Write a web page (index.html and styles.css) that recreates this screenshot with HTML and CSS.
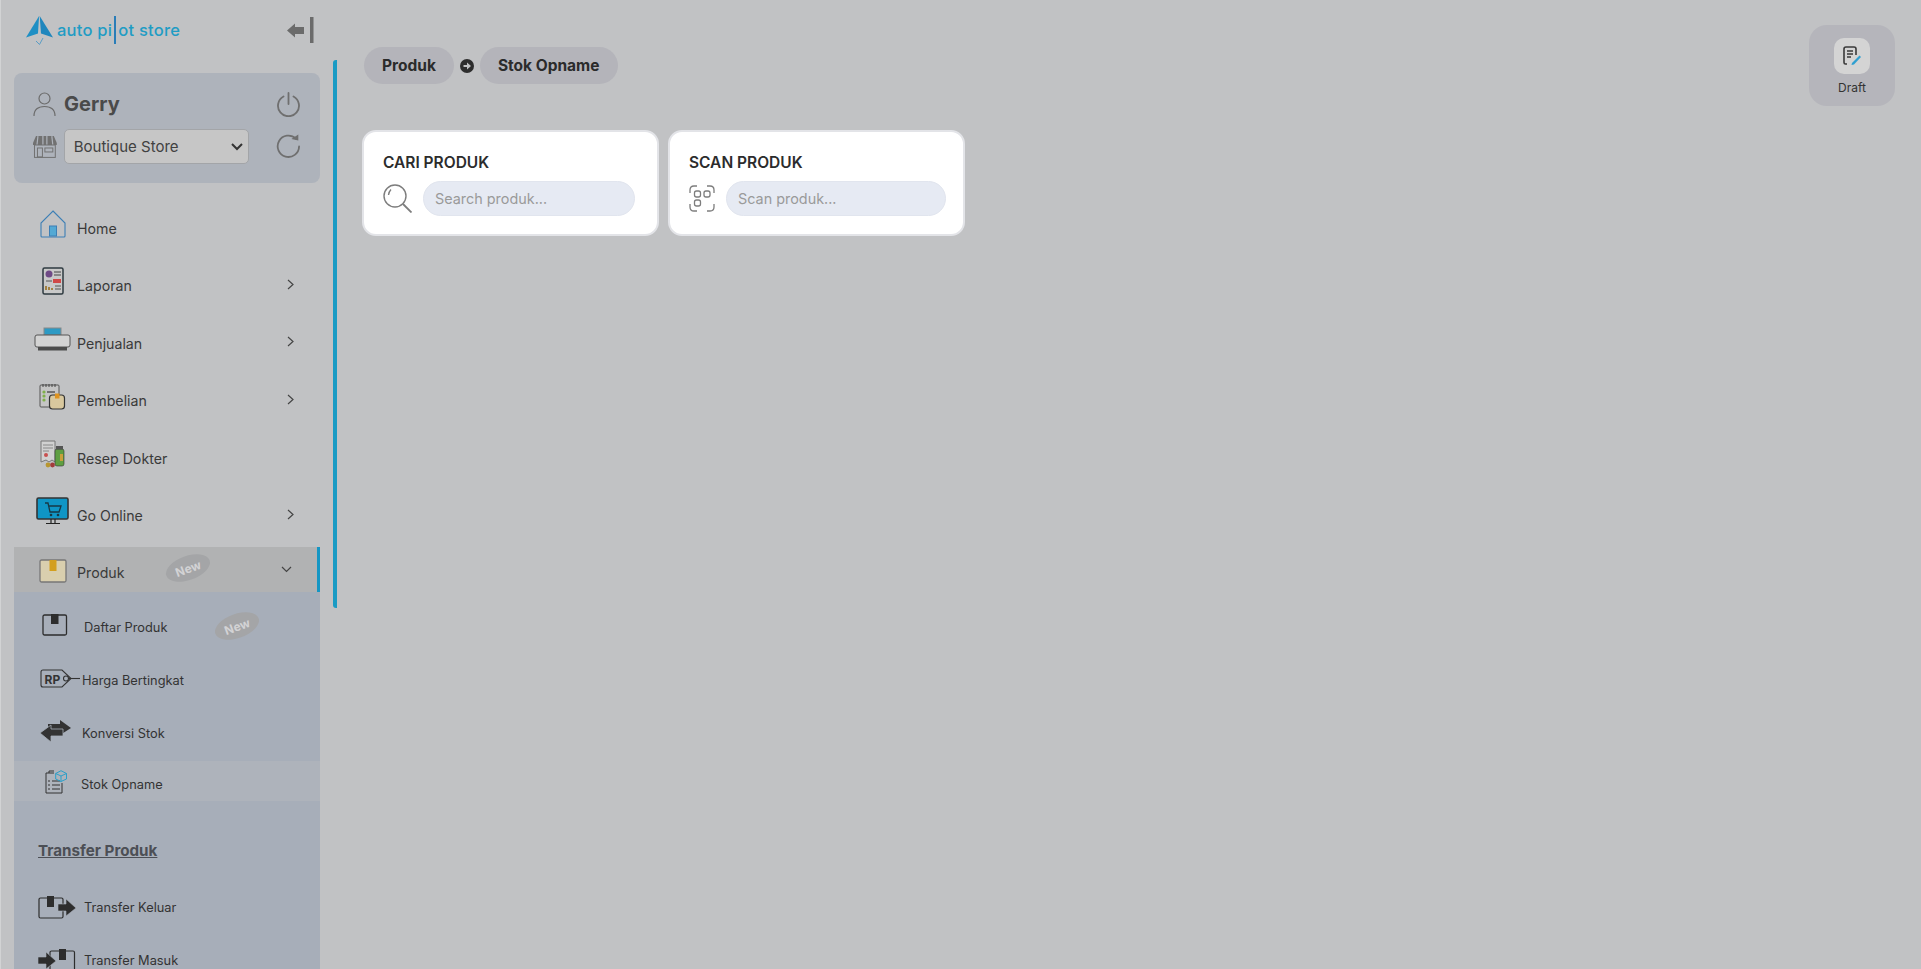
FILE: index.html
```html
<!DOCTYPE html>
<html lang="id">
<head>
<meta charset="utf-8">
<title>Stok Opname</title>
<link rel="stylesheet" href="styles.css">
</head>
<body>
<div class="app">
  <aside class="sidebar">
    <div class="brand">
      <div class="logo">
        <svg class="logo-mark" width="27" height="29" viewBox="0 0 27 29"><path d="M13.700 0 L27 21.500 L15 17.500 Z" fill="#1f86bd"/><path d="M13.100 0 L0 21.500 L12 17.500 Z" fill="#1f8fc4"/><path d="M10 25 L13.500 28.500 L17 22" fill="none" stroke="#5a9cc4" stroke-width="1"/></svg>
        <span class="logo-text">auto pi<span class="logo-bar"></span>ot store</span>
      </div>
      <svg class="collapse" width="27" height="27" viewBox="0 0 27 27"><path d="M0 13.500 L8 6.500 V10 H17 V17 H8 V20.500 Z" fill="#6b6b6b"/><rect x="23" y="0" width="3.500" height="26" fill="#6b6b6b"/></svg>
    </div>
    <div class="scroll-thumb"></div>
    <section class="user-card">
      <div class="user-row">
        <svg class="user-icon" width="23" height="24" viewBox="0 0 23 24" fill="none" stroke="#6c6c6c" stroke-width="1.200"><circle cx="11.500" cy="6.500" r="5.500"/><path d="M1 24 C1 17 6 14.500 11.500 14.500 S22 17 22 24"/></svg>
        <span class="user-name">Gerry</span>
        <svg class="side-action" width="25" height="25" viewBox="0 0 25 25" fill="none" stroke="#6f6f6f" stroke-width="1.800" stroke-linecap="round"><path d="M7.500 4.500 A10.500 10.500 0 1 0 17.500 4.500"/><path d="M12.500 1 V12"/></svg>
      </div>
      <div class="user-row store-row">
        <svg class="store-icon" width="24" height="22" viewBox="0 0 24 22"><path d="M3 0 H21 L24 7 V9 H0 V7 Z" fill="#717171"/><path d="M5 0 L4 9 M10 0 V9 M14 0 V9 M19 0 L20 9" stroke="#aeb3bb" stroke-width="1.200"/><rect x="1.500" y="9" width="21" height="12.500" fill="none" stroke="#717171" stroke-width="1"/><rect x="4.500" y="12" width="5" height="9" fill="none" stroke="#717171"/><rect x="12" y="12" width="8" height="4" fill="none" stroke="#717171"/></svg>
        <div class="store-select">
          <span>Boutique Store</span>
          <svg width="12" height="8" viewBox="0 0 12 8" fill="none" stroke="#333" stroke-width="2"><path d="M1 1 L6 6 L11 1"/></svg>
        </div>
        <svg class="side-action" width="25" height="25" viewBox="0 0 25 25" fill="none" stroke="#6f6f6f" stroke-width="1.800" stroke-linecap="round"><path d="M20 4.500 A10.800 10.800 0 1 0 23.300 12.500"/><path d="M15.500 5 L22.500 6.500 L22.500 0.500 Z" fill="#6f6f6f" stroke="none"/></svg>
      </div>
    </section>

    <nav class="menu">
      <a class="item"><span class="item-icon"><svg width="26" height="28" viewBox="0 0 26 28" fill="none"><path d="M13 1 L25 13 V26 Q25 27 24 27 H2 Q1 27 1 26 V13 Z" stroke="#3d7fb5" stroke-width="1.100"/><rect x="9.500" y="16" width="7" height="10" fill="#54a9d4" stroke="#3d7fb5"/></svg></span><span class="label">Home</span></a>
      <a class="item"><span class="item-icon"><svg width="22" height="28" viewBox="0 0 22 28"><rect x="1" y="1" width="20" height="26" rx="1.500" fill="#c9c9c9" stroke="#2e3a40" stroke-width="1.500"/><circle cx="7" cy="7" r="3.500" fill="#6f4a86"/><path d="M12 5 H19 M12 8 H19" stroke="#444"/><path d="M4 14 H10" stroke="#555"/><rect x="11" y="12" width="8" height="4" fill="#d04848"/><path d="M4 23 V19 M7 23 V20 M10 23 V21" stroke="#9a7020" stroke-width="1.600"/><path d="M13 19 H19 M13 22 H19" stroke="#555"/></svg></span><span class="label">Laporan</span><svg class="chev" width="7" height="11" viewBox="0 0 7 11" fill="none" stroke="#444" stroke-width="1.200"><path d="M1 1 L6 5.500 L1 10"/></svg></a>
      <a class="item"><span class="item-icon"><svg width="37" height="24" viewBox="0 0 37 24"><rect x="10" y="1" width="17" height="7" fill="#2d9ac4" stroke="#888"/><rect x="1" y="8" width="35" height="12" rx="2" fill="#d3d3d3" stroke="#555"/><rect x="4" y="20" width="29" height="3.500" fill="#4c4c4c"/></svg></span><span class="label">Penjualan</span><svg class="chev" width="7" height="11" viewBox="0 0 7 11" fill="none" stroke="#444" stroke-width="1.200"><path d="M1 1 L6 5.500 L1 10"/></svg></a>
      <a class="item"><span class="item-icon"><svg width="27" height="27" viewBox="0 0 27 27"><rect x="1" y="2" width="19" height="22" rx="1" fill="#c5c5c5" stroke="#555"/><path d="M4 1 V4 M7 1 V4 M10 1 V4 M13 1 V4 M16 1 V4" stroke="#444"/><circle cx="5" cy="9" r="1.600" fill="#7fb04a"/><circle cx="5" cy="13" r="1.600" fill="#7fb04a"/><circle cx="5" cy="17" r="1.600" fill="#7fb04a"/><path d="M8 9 H16" stroke="#444" stroke-width="1.300"/><rect x="10.500" y="12" width="15" height="14" rx="3" fill="#d9c89e" stroke="#333" stroke-width="1.200"/><rect x="16" y="10.500" width="4.500" height="5" fill="#de9320"/></svg></span><span class="label">Pembelian</span><svg class="chev" width="7" height="11" viewBox="0 0 7 11" fill="none" stroke="#444" stroke-width="1.200"><path d="M1 1 L6 5.500 L1 10"/></svg></a>
      <a class="item"><span class="item-icon"><svg width="25" height="28" viewBox="0 0 25 28"><path d="M1 1 H15 V22 L12 20 L9 22 L6 20 L1 22 Z" fill="#d1d1d1" stroke="#777"/><path d="M3 5 H13 M3 8 H13 M3 11 H9" stroke="#888"/><circle cx="6" cy="15" r="2" fill="#c85050"/><rect x="15" y="9" width="9" height="17" rx="2" fill="#5f9f42" stroke="#333" stroke-width=".6"/><rect x="16" y="6" width="7" height="3.500" fill="#555"/><rect x="20" y="14" width="3" height="7" fill="#c9a13c"/><circle cx="8" cy="25" r="2.400" fill="#b89630"/><circle cx="12.500" cy="25" r="2.400" fill="#a33c3c"/></svg></span><span class="label">Resep Dokter</span></a>
      <a class="item"><span class="item-icon"><svg width="33" height="28" viewBox="0 0 33 28"><rect x="1" y="1" width="31" height="21" rx="1.500" fill="#0f95c5" stroke="#333" stroke-width="1.600"/><path d="M9 6 H12 L14 15 H23 L25 9 H13" fill="none" stroke="#173845" stroke-width="1.300"/><circle cx="15" cy="18" r="1.300" fill="#173845"/><circle cx="22" cy="18" r="1.300" fill="#173845"/><path d="M15 22 V26 M19 22 V26 M10 26.500 H24" stroke="#222" stroke-width="1.200"/></svg></span><span class="label">Go Online</span><svg class="chev" width="7" height="11" viewBox="0 0 7 11" fill="none" stroke="#444" stroke-width="1.200"><path d="M1 1 L6 5.500 L1 10"/></svg></a>
      <a class="item item-open"><span class="item-icon"><svg width="28" height="25" viewBox="0 0 28 25"><rect x="1" y="1" width="26" height="22" rx="1.500" fill="#d9cfae" stroke="#777" stroke-width="1.300"/><rect x="10.500" y="1" width="7" height="11" fill="#d39f1e"/></svg></span><span class="label">Produk</span><span class="badge">New</span><svg class="chev-down" width="11" height="7" viewBox="0 0 11 7" fill="none" stroke="#444" stroke-width="1.200"><path d="M1 1 L5.500 5.500 L10 1"/></svg></a>
      <div class="submenu">
        <a class="sub sub-daftar"><span class="sub-icon"><svg width="26" height="22" viewBox="0 0 26 22"><rect x="1" y="1" width="23.500" height="20" rx="1.500" fill="none" stroke="#2d2d2d" stroke-width="1.300"/><rect x="9" y="0" width="7.500" height="10" fill="#2d2d2d"/></svg></span><span class="sub-label">Daftar Produk</span><span class="badge badge-sub">New</span></a>
        <a class="sub sub-harga"><span class="sub-icon"><svg width="40" height="19" viewBox="0 0 40 19" fill="none" stroke="#333" stroke-width="1.100"><path d="M3 1 H22 L31 9.500 L22 18 H3 Q1 18 1 16 V3 Q1 1 3 1 Z"/><circle cx="26" cy="9.500" r="2.500"/><path d="M28.500 9.500 H40"/><text class="rp-text" x="4.500" y="14.500">RP</text></svg></span><span class="sub-label harga">Harga Bertingkat</span></a>
        <a class="sub sub-konversi"><span class="sub-icon"><svg width="31" height="22" viewBox="0 0 31 22" fill="#333"><path d="M31 8 L20 0 V4 H8 V11 H20 V15 Z"/><path d="M0 13 L11 5 V9 H23 V16 H11 V22 Z" stroke="#a7aeb9" stroke-width=".8"/></svg></span><span class="sub-label konversi">Konversi Stok</span></a>
        <a class="sub sub-active"><span class="sub-icon opname"><svg width="23" height="24" viewBox="0 0 23 24" fill="none"><path d="M10 3 H2 V23 H18 V13" stroke="#333" stroke-width="1"/><path d="M5 3 V1 H10" stroke="#333"/><path d="M4 11 H6 M4 15 H6 M4 19 H6 M8 11 H16 M8 15 H16 M8 19 H16" stroke="#333" stroke-width="1.200"/><path d="M17 .7 L22.500 3.500 V9 L17 11.500 L11.700 9 V3.500 Z M11.700 3.500 L17 6 L22.500 3.500 M17 6 V11.500" stroke="#2a9fc9" stroke-width="1"/></svg></span><span class="sub-label stok">Stok Opname</span></a>
        <h4 class="sub-title">Transfer Produk</h4>
        <a class="sub"><span class="sub-icon"><svg width="38" height="23" viewBox="0 0 38 23"><rect x="1" y="2" width="24" height="20" rx="1.500" fill="none" stroke="#2d2d2d" stroke-width="1.200"/><rect x="9" y="0" width="7" height="11" fill="#2d2d2d"/><path d="M38 12 L28 3 V8 H20 V15 H28 V20 Z" fill="#2d2d2d" stroke="#a7aeb9" stroke-width=".6"/></svg></span><span class="sub-label">Transfer Keluar</span></a>
        <a class="sub"><span class="sub-icon"><svg width="38" height="23" viewBox="0 0 38 23"><rect x="12" y="2" width="24.500" height="20" rx="1.500" fill="none" stroke="#2d2d2d" stroke-width="1.200"/><rect x="21" y="0" width="7" height="11" fill="#2d2d2d"/><path d="M18 12 L8 3 V8 H0 V15 H8 V20 Z" fill="#2d2d2d" stroke="#a7aeb9" stroke-width=".6"/></svg></span><span class="sub-label">Transfer Masuk</span></a>
      </div>
    </nav>
  </aside>

  <main class="main">
    <header class="top">
      <div class="crumbs">
        <span class="crumb">Produk</span>
        <svg class="crumb-arrow" width="14" height="14" viewBox="0 0 14 14"><circle cx="7" cy="7" r="7" fill="#2d2d2d"/><path d="M3.500 6 H7 V3.500 L11 7 L7 10.500 V8 H3.500 Z" fill="#c1c2c4"/></svg>
        <span class="crumb">Stok Opname</span>
      </div>
      <button class="draft">
        <span class="draft-tile"><svg width="18" height="20" viewBox="0 0 18 20" fill="none"><path d="M4 18 H2.500 Q1 18 1 16.500 V3 Q1 1 3 1 H11 Q13 1 13 3 V9" stroke="#3a3a3a" stroke-width="1.600"/><path d="M4 5 H10 M4 8 H10 M4 11 H8" stroke="#3a3a3a" stroke-width="1.400"/><path d="M16.500 9.500 L9 17 L8.500 19 L11 18.500 L18 11 Z" fill="#2f9fd0"/></svg></span>
        <span class="draft-label">Draft</span>
      </button>
    </header>
    <div class="cards">
      <section class="card card-search">
        <h3 class="card-title">CARI PRODUK</h3>
        <div class="field">
          <svg width="29" height="29" viewBox="0 0 29 29" fill="none" stroke="#7d7d7d" stroke-width="1.400"><circle cx="12" cy="12" r="11"/><path d="M20 20 L28.500 28.500" stroke-width="1.800"/><path d="M5.500 11 Q6 7.500 8 5.500"/></svg>
          <input class="input" type="text" placeholder="Search produk...">
        </div>
      </section>
      <section class="card card-scan">
        <h3 class="card-title">SCAN PRODUK</h3>
        <div class="field">
          <svg width="26" height="27" viewBox="0 0 26 27" fill="none" stroke="#7d7d7d" stroke-width="1.300"><path d="M1 8 V5 Q1 1 5 1 H8 M18 1 H21 Q25 1 25 5 V8 M25 19 V22 Q25 26 21 26 H18 M8 26 H5 Q1 26 1 22 V19"/><rect x="5.500" y="6" width="6" height="6" rx="2"/><rect x="15" y="6" width="6" height="6" rx="2"/><rect x="5.500" y="15" width="6" height="6" rx="2"/></svg>
          <input class="input" type="text" placeholder="Scan produk...">
        </div>
      </section>
    </div>
  </main>
</div>
</body>
</html>
```

FILE: styles.css
```css
* { box-sizing: border-box; }
html, body { margin: 0; height: 100%; }
body {
  background: #c1c2c4;
  font-family: "Inter", "Liberation Sans", sans-serif;
  color: #333;
  overflow: hidden;
}
.app { display: flex; height: 969px; border-left: 1px solid #d2d3d4; }

/* Sidebar */
.sidebar { position: relative; width: 336px; flex: none; height: 969px; overflow: hidden; padding-left: 13px; }
.brand { display: flex; align-items: center; justify-content: space-between; height: 60px; padding: 0 0 0 12px; width: 300px; }
.logo { display: flex; align-items: center; gap: 4px; color: #1f9cc4; }
.logo-text { font-size: 16.500px; letter-spacing: .25px; display: inline-flex; align-items: center; white-space: pre; font-weight: 500; }
.logo-bar { display: inline-block; width: 2px; height: 28px; background: #2a7db8; margin: 0 2px; }
.scroll-thumb { position: absolute; left: 332px; top: 60px; width: 6px; height: 548px; border-radius: 3px; background: #1a9bc4; }
.user-card { width: 306px; height: 110px; margin-top: 13px; padding: 19px 19px 0 19px; background: #aeb3bb; border-radius: 8px; display: flex; flex-direction: column; gap: 13px; }
.user-row { display: flex; align-items: center; height: 24px; }
.user-name { font-size: 20px; font-weight: 700; color: #4a4a4a; margin-left: 8px; flex: 1; }
.store-row { height: 35px; }
.store-select { width: 187px; height: 35px; margin-left: 7px; margin-right: 27px; display: flex; align-items: center; justify-content: space-between; padding: 0 5px 0 9px; background: #c6c6c6; border: 1px solid #a3a5a8; border-radius: 5px; font-size: 15px; color: #414141; }

.menu { display: flex; flex-direction: column; width: 306px; margin-top: 15px; }
.item { display: flex; align-items: center; height: 57.500px; padding: 0 26px 0 14px; position: relative; font-size: 14.200px; color: #3a3a3a; }
.item-icon { width: 49px; display: flex; justify-content: center; flex: none; margin-bottom: 6px; }
.label { flex: 1; padding-top: 3px; }
.item-open { height: 45px; margin-top: 4px; background: #b1b2b3; border-right: 3px solid #1596c4; padding-right: 24px; }
.item-open .item-icon { margin-top: 3px; margin-bottom: 0; }
.item-open .label { padding-top: 5px; }
.chev-down { margin-right: 1px; }
.badge { position: absolute; font-size: 12px; font-weight: 700; color: #d3d3d5; background: #a4a5a7; width: 46px; height: 24px; border-radius: 50%; display: flex; align-items: center; justify-content: center; transform: rotate(-20deg); left: 151px; top: 9px; }
.submenu { background: #a7aeb9; padding-top: 9px; padding-bottom: 40px; }
.sub { display: flex; align-items: center; height: 53px; padding-left: 24px; position: relative; font-size: 12.800px; color: #333; }
.sub-icon { width: 44px; flex: none; display: flex; }
.sub-label { padding-left: 2px; }
.sub-daftar .sub-icon { padding-left: 4px; padding-bottom: 5px; }
.sub-harga .sub-icon { padding-left: 2px; padding-bottom: 4px; }
.sub-konversi .sub-icon { padding-left: 2px; padding-bottom: 5px; }
.harga { padding-left: 0; }
.konversi { padding-left: 0; padding-bottom: 1px; }
.badge-sub { left: 200px; top: 13px; }
.opname { padding-left: 6px; padding-bottom: 6px; width: 42px; }
.stok { padding-left: 1px; }
.sub-active { height: 40px; margin-top: 1px; background: #aeb3bb; padding-top: 7px; }
.sub-title { margin: 0; padding: 40px 0 20px 24px; font-size: 15.200px; font-weight: 700; color: #4c4f55; text-decoration: underline; line-height: 20px; }
.rp-text { font-size: 12px; font-weight: 700; fill: #333; stroke: none; }

/* Main */
.main { flex: 1; min-width: 0; padding: 0 26px 0 26px; }
.top { display: flex; justify-content: space-between; height: 130px; padding-top: 25px; }
.crumbs { display: flex; align-items: center; align-self: flex-start; height: 37px; margin-top: 22px; margin-left: 1px; gap: 6px; }
.crumb { display: flex; align-items: center; height: 37px; padding: 0 18px; border-radius: 19px; background: #b4b4ba; font-size: 15.500px; font-weight: 700; color: #2b2b2b; }
.crumb-arrow { flex: none; }
.draft { width: 86px; height: 81px; display: flex; flex-direction: column; align-items: center; padding: 13px 0 0; gap: 6px; background: #b5b5bb; border: 0; border-radius: 18px; font: inherit; }
.draft-tile { width: 36px; height: 36px; display: flex; align-items: center; justify-content: center; background: #d4d4d4; border-radius: 10px; }
.draft-label { font-size: 12px; color: #333; }

.cards { display: flex; gap: 9px; margin-left: -1px; }
.card { width: 297px; height: 106px; padding: 23px 17px 0 19px; background: #fff; border: 2px solid #e3e4e8; border-radius: 14px; }
.card-search { padding-right: 22px; }
.card-title { margin: 0 0 10px; font-size: 15.500px; font-weight: 600; color: #2c2c2c; line-height: 16px; }
.field { display: flex; align-items: center; gap: 11px; }
.input { flex: 1; min-width: 0; width: 100%; height: 35px; padding: 0 11px; background: #e6eaf3; border: 1px solid #e1e5ee; border-radius: 18px; font: 14.400px "Inter", sans-serif; outline: none; }
.input::placeholder { color: #9a9a9a; }
```
